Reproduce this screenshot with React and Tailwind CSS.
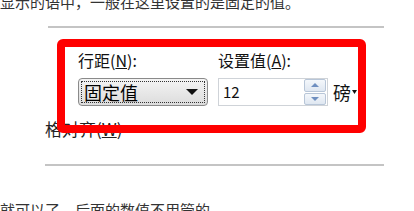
import React from "react";

const font = { fontFamily: '"Noto Sans CJK SC", "Noto Sans", sans-serif' };

export default function App() {
  return (
    <div
      className="relative w-[414px] h-[211px] overflow-hidden bg-white text-[#222]"
      style={font}
    >
      <div className="mt-[-7px] whitespace-nowrap text-[15px] leading-[18px] text-[#333]">
        显示的语中，一般在这里设置的是固定的值。
      </div>
      <div className="mt-[15px] ml-[48px] w-[336px] h-[2px] bg-[#c4c4c4]" />

      <div className="mt-[22px] flex text-[16px] leading-[20px] text-[#111]">
        <div className="ml-[78px] w-[140px] whitespace-nowrap">
          行距(<span className="underline">N</span>):
        </div>
        <div className="whitespace-nowrap">
          设置值(<span className="underline">A</span>):
        </div>
      </div>

      <div className="mt-[8px] flex items-center">
        <div className="ml-[78px] w-[130px] h-[28px] rounded-[4px] border border-[#8a8a8a] bg-gradient-to-b from-[#f4f4f4] to-[#dcdcdc] p-[2px]">
          <div className="flex h-full items-center justify-between border border-dotted border-[#333] pl-[2px] pr-[6px]">
            <span className="text-[18px] leading-[20px] text-black">固定值</span>
            <svg width="12" height="6" viewBox="0 0 12 6">
              <polygon points="0,0 12,0 6,6" fill="#111" />
            </svg>
          </div>
        </div>
        <div className="ml-[10px] flex w-[110px] h-[28px] items-center border border-[#cfd3d8] bg-white">
          <span className="ml-[4px] flex-1 text-[15px] leading-[18px] text-[#111]">12</span>
          <div className="mr-[1px] flex h-[26px] w-[22px] flex-col gap-[1px]">
            <div className="flex flex-1 items-center justify-center rounded-[2px] border border-[#b8c6d8] bg-gradient-to-b from-[#f4f7fb] to-[#dfe7f1]">
              <svg width="8" height="4" viewBox="0 0 8 4">
                <polygon points="0,4 8,4 4,0" fill="#6f8fc0" />
              </svg>
            </div>
            <div className="flex flex-1 items-center justify-center rounded-[2px] border border-[#b8c6d8] bg-gradient-to-b from-[#f4f7fb] to-[#dfe7f1]">
              <svg width="8" height="4" viewBox="0 0 8 4">
                <polygon points="0,0 8,0 4,4" fill="#6f8fc0" />
              </svg>
            </div>
          </div>
        </div>
        <span className="ml-[5px] text-[18px] leading-[20px] text-[#111]">磅</span>
        <svg width="5" height="4" viewBox="0 0 5 4" className="ml-[1px]">
          <polygon points="0,0 5,0 2.5,4" fill="#111" />
        </svg>
      </div>

      <div className="mt-[13px] ml-[45px] whitespace-nowrap text-[17px] leading-[20px] text-[#222]">
        格对齐(<span className="underline">W</span>)
      </div>
      <div className="mt-[25px] ml-[45px] w-[339px] h-[2px] bg-[#c4c4c4]" />
      <div className="mt-[35px] whitespace-nowrap text-[15px] leading-[18px] text-[#333]">
        就可以了，后面的数值不用管的。
      </div>

      <div className="absolute left-[57px] top-[39px] w-[309px] h-[94px] rounded-[6px] border-[8px] border-[#ff0000]" />
    </div>
  );
}
